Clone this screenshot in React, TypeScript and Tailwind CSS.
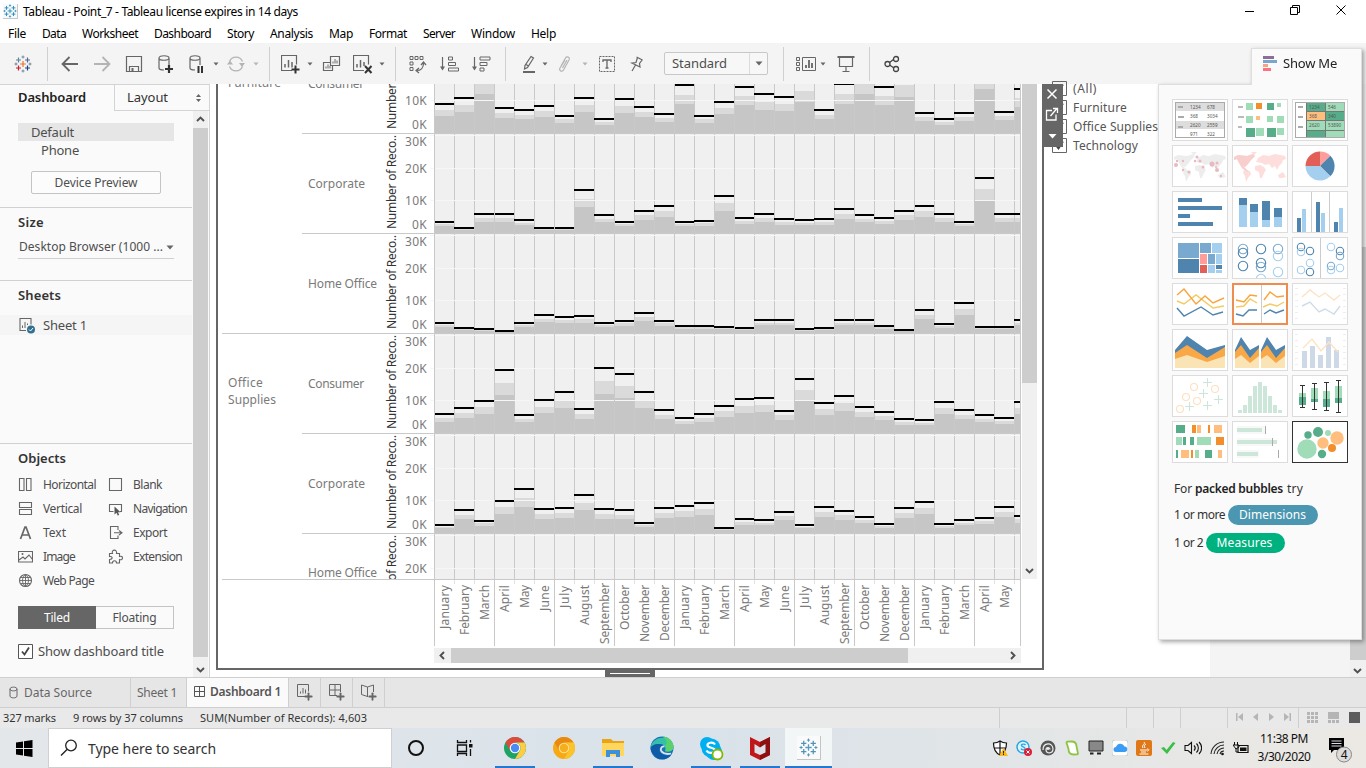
import React, { useLayoutEffect, useRef } from "react";
import { Plus } from "lucide-react";

/* Text whose letter spacing is adjusted so that it fills a known length. */
function Fit({ w, v = false, className = "", children }: { w: number; v?: boolean; className?: string; children: string }) {
  const ref = useRef<HTMLSpanElement>(null);
  useLayoutEffect(() => {
    const el = ref.current;
    if (!el) return;
    el.style.letterSpacing = "0px";
    const box = el.getBoundingClientRect();
    const natural = v ? box.height : box.width;
    el.style.letterSpacing = `${(w - natural) / children.length}px`;
  }, [w, v, children]);
  return (
    <span ref={ref} className={`inline-block shrink-0 whitespace-nowrap ${v ? "rotate-180 [writing-mode:vertical-rl]" : ""} ${className}`}>
      {children}
    </span>
  );
}

function Svg({ w, h, className = "", children }: { w: number; h: number; className?: string; children: React.ReactNode }) {
  return (
    <svg width={w} height={h} viewBox={`0 0 ${w} ${h}`} className={`block shrink-0 ${className}`} fill="none">
      {children}
    </svg>
  );
}

/* ---------- title and menu ---------- */

function TableauMark({ size, colors }: { size: number; colors: string[] }) {
  const [a, b, c, d, e] = colors;
  return (
    <svg width={size} height={size} viewBox="0 0 18 18" className="block shrink-0" strokeWidth="1.2">
      <path d="M9 6v6M6 9h6" stroke={a} />
      <path d="M4.5 2.5v5M2 5h5" stroke={b} />
      <path d="M13.5 2.5v5M11 5h5" stroke={c} />
      <path d="M4.5 10.5v5M2 13h5" stroke={d} />
      <path d="M13.5 10.5v5M11 13h5" stroke={e} />
      <path d="M9 .5v3M7.5 2h3M9 14.5v3M7.5 16h3M2 7.5v3M.5 9h3M16 7.5v3M14.5 9h3" stroke={b} strokeWidth=".9" />
    </svg>
  );
}

const menus: [string, number, string][] = [
  ["File", 18, "ml-2"],
  ["Data", 24, "ml-4"],
  ["Worksheet", 56, "ml-4"],
  ["Dashboard", 57, "ml-4"],
  ["Story", 27, "ml-4"],
  ["Analysis", 43, "ml-4"],
  ["Map", 24, "ml-4"],
  ["Format", 38, "ml-4"],
  ["Server", 32, "ml-4"],
  ["Window", 44, "ml-4"],
  ["Help", 25, "ml-4"],
];

function TitleBar() {
  return (
    <div className="flex h-[23px] items-center bg-white pl-[3px] text-black">
      <div className="border-r border-b border-[#c8c8c8] bg-[#f6fafc]">
        <TableauMark size={14} colors={["#2f8fb8", "#2b8ab5", "#2b8ab5", "#2b8ab5", "#2b8ab5"]} />
      </div>
      <Fit w={275} className="ml-[5px] text-[12px]">Tableau - Point_7 - Tableau license expires in 14 days</Fit>
      <div className="ml-auto flex items-center pr-[19px] pb-0.5">
        <Svg w={10} h={10}><path d="M0 5.500h9" stroke="#000" /></Svg>
        <Svg w={11} h={11} className="ml-[35px]"><path d="M.5 2.5h7v7h-7zM2.5 2.5v-2h7v7h-2" stroke="#000" /></Svg>
        <Svg w={11} h={11} className="ml-[35px]"><path d="M.5 .5l9 9M9.5 .5l-9 9" stroke="#000" /></Svg>
      </div>
    </div>
  );
}

function MenuBar() {
  return (
    <div className="flex h-5 items-center bg-white pt-[2px] text-[12px] text-black">
      {menus.map(([name, w, gap]) => (
        <Fit key={name} w={w} className={gap}>{name}</Fit>
      ))}
    </div>
  );
}

/* ---------- toolbar ---------- */

const G = "#666666";
const Divider = ({ className }: { className: string }) => <div className={`h-[34px] w-px shrink-0 bg-[#d0d0d0] ${className}`} />;
const Caret = ({ className, color = G }: { className: string; color?: string }) => (
  <Svg w={6} h={4} className={className}><path d="M.5 .5h5L3 3.5z" fill={color} /></Svg>
);

function Toolbar() {
  return (
    <div className="flex h-[41px] shrink-0 items-center bg-[#f4f4f4]">
      <div className="ml-3.5"><TableauMark size={18} colors={["#e8762c", "#59879b", "#5b6591", "#c72035", "#1f447e"]} /></div>
      <Divider className="ml-[15px]" />
      <Svg w={18} h={18} className="ml-[13px]"><path d="M17 9H2M8.500 2L1.500 9l7 7" stroke={G} strokeWidth="1.8" /></Svg>
      <Svg w={18} h={18} className="ml-3.5"><path d="M1 9h15M9.500 2l7 7-7 7" stroke="#b4b4b4" strokeWidth="1.800" /></Svg>
      <Svg w={18} h={18} className="ml-3.5">
        <path d="M1.500 1.500h15v15h-15zM4.500 16.500v-5h9v5" stroke={G} strokeWidth="1.200" /><path d="M6.500 13h2v3.500h-2z" fill={G} />
      </Svg>
      <Svg w={18} h={20} className="ml-3.5">
        <path d="M2 4v10c0 1.500 2.500 2 5 2M2 4c0-3 10-3 10 0s-10 3-10 0M12 4v7" stroke={G} strokeWidth="1.200" />
        <path d="M12 11v8M8 15h8" stroke="#333" strokeWidth="2.200" />
      </Svg>
      <Svg w={18} h={20} className="ml-[13px]">
        <path d="M2 4v10c0 1.500 2.500 2 5 2M2 4c0-3 10-3 10 0s-10 3-10 0M12 4v7" stroke={G} strokeWidth="1.200" />
        <path d="M10.500 12v7M14 12v7" stroke="#333" strokeWidth="2" />
      </Svg>
      <Caret className="ml-[7px]" />
      <Svg w={18} h={18} className="ml-2">
        <path d="M2.500 6.500A7 7 0 0 1 15.500 6.500M2.500 11.500A7 7 0 0 0 15.500 11.500" stroke="#b4b4b4" strokeWidth="1.300" />
        <path d="M12 8h6l-3 4zM0 9.500h6L3 5.500z" fill="#b4b4b4" />
      </Svg>
      <Caret className="ml-2" color="#b4b4b4" />
      <Divider className="ml-2.5" />
      <Svg w={20} h={20} className="ml-[11px]">
        <path d="M11 16.500H.500v-15h15v9" stroke={G} strokeWidth="1.200" /><path d="M4 13.500V10M7.500 13.500V6M11 13.500V8" stroke={G} strokeWidth="1.500" />
        <path d="M14.500 11.500v8M10.500 15.500h8" stroke="#333" strokeWidth="2" />
      </Svg>
      <Caret className="ml-1.5" />
      <Svg w={20} h={18} className="ml-[9px]">
        <path d="M8.500 1.500h9v9h-9zM8 7.500H1.500v8h9v-5" stroke={G} strokeWidth="1.200" />
        <path d="M11 8.500V6.500M13 8.500V4M15 8.500V5.500M4 13.500v-2M6 13.500v-4M8 13.500v-2.500" stroke={G} />
      </Svg>
      <Svg w={20} h={20} className="ml-[11px]">
        <path d="M11 16.500H.500v-15h15v9" stroke={G} strokeWidth="1.200" /><path d="M4 13.500V10M7.500 13.500V6M11 12V8" stroke={G} strokeWidth="1.500" />
        <path d="M12 12l6.500 7M18.500 12L12 19" stroke="#333" strokeWidth="2" />
      </Svg>
      <Caret className="ml-1.5" />
      <Divider className="ml-2.5" />
      <Svg w={18} h={20} className="ml-[13px]">
        <path d="M1 2.500h3v3H1zM6 2.500h3v3H6zM11 2.500h3v3h-3zM1 8h3v3H1zM1 13.500h3v3H1z" stroke={G} />
        <path d="M8 16.500c4 0 6.500-3 6.500-7M10 14l-3 2.500 3 2.500M12 11l2.500-3 2.500 3" stroke={G} strokeWidth="1.200" />
      </Svg>
      <Svg w={20} h={18} className="ml-[13px]">
        <path d="M2.500 2v12" stroke={G} strokeWidth="1.200" /><path d="M0 11.500h5l-2.500 4z" fill={G} />
        <path d="M8.500 2h4v3h-4zM8.500 7.500h7v3h-7zM8.500 13h10v3h-10z" stroke={G} />
      </Svg>
      <Svg w={20} h={18} className="ml-3">
        <path d="M2.500 2v12" stroke={G} strokeWidth="1.200" /><path d="M0 11.500h5l-2.500 4z" fill={G} />
        <path d="M8 2h10v3H8zM8 7.500h7v3H8zM8 13h4v3H8z" stroke={G} />
      </Svg>
      <Divider className="ml-[13px]" />
      <Svg w={18} h={20} className="ml-[14px]">
        <path d="M11 2.500l2.500 1.500-6 9.500-3 1.500.500-3.500zM6 10.500l2.500 1.500" stroke={G} strokeWidth="1.200" /><path d="M3 18h12" stroke={G} strokeWidth="2" />
      </Svg>
      <Caret className="ml-[4px]" />
      <Svg w={18} h={18} className="ml-2">
        <path d="M5 11l4.500-8c1-2 5-1 3.500 2L7.500 15c-1.500 2.500-5 .500-3.500-2l5-8M6.500 13l4.500-8" stroke="#b4b4b4" strokeWidth="1.200" />
      </Svg>
      <Caret className="ml-2" color="#b4b4b4" />
      <Svg w={18} h={18} className="ml-2.5">
        <path d="M1.500 1.500h15v15h-15z" stroke={G} strokeDasharray="2 1" /><path d="M5 7V5h8v2M9 5v8M7.500 13h3" stroke={G} strokeWidth="1.300" />
      </Svg>
      <Svg w={18} h={18} className="ml-3">
        <path d="M8.500 2l6 3M9.500 2.500L8 7.500l-4 .500 8 4-.500-3.500 3-4M7.500 10L4 16" stroke={G} strokeWidth="1.200" />
      </Svg>
      <div className="ml-[18px] flex h-[23px] w-[104px] items-center rounded-[2px] border border-[#c8c8c8] bg-[#f7f7f7] pl-[7px]">
        <Fit w={55} className="text-[13px] text-[#4e4e4e]">Standard</Fit>
        <div className="ml-auto flex h-full w-[18px] items-center justify-center border-l border-[#dcdcdc]">
          <Svg w={8} h={5}><path d="M.500 .500h7L4 4.500z" fill={G} /></Svg>
        </div>
      </div>
      <Divider className="ml-[15px]" />
      <Svg w={20} h={18} className="ml-3">
        <path d="M.500 2.500h3v3h-3zM.500 7.500h3v3h-3zM.500 12.500h3v3h-3zM6.500 2.500h13v13h-13z" stroke={G} /><path d="M10 13V10M13 13V5M16 13V8" stroke={G} strokeWidth="1.800" />
      </Svg>
      <Caret className="ml-1" />
      <Svg w={20} h={18} className="ml-2.5">
        <path d="M1.500 2h17" stroke={G} strokeWidth="2" /><path d="M3.500 2v9.500h13V2M10 11.500V16M6.500 16.500h7" stroke={G} strokeWidth="1.200" />
      </Svg>
      <Divider className="ml-[13px]" />
      <Svg w={18} h={18} className="ml-[13px]">
        <path d="M6.500 7.500l4-3M6.500 10l4.500 3" stroke="#444" strokeWidth="1.300" />
        <circle cx="4.500" cy="9" r="2.500" stroke="#444" strokeWidth="1.300" /><circle cx="13" cy="4" r="2.500" stroke="#444" strokeWidth="1.300" /><circle cx="13" cy="14" r="2.500" stroke="#444" strokeWidth="1.300" />
      </Svg>
    </div>
  );
}

/* ---------- left panel ---------- */

function ArrowGlyph({ dir }: { dir: "up" | "down" | "left" | "right" }) {
  const d = { up: "M1 6l3.500-3.500L8 6", down: "M1 3l3.500 3.500L8 3", left: "M6 1L2.500 4.500 6 8", right: "M3 1l3.500 3.500L3 8" }[dir];
  return <Svg w={9} h={9}><path d={d} stroke="#505050" strokeWidth="1.900" /></Svg>;
}

const S = { stroke: "#666", strokeWidth: 1.1 };
const objects: { name: string; w: number; icon: React.ReactNode }[] = [
  { name: "Horizontal", w: 53, icon: <path d="M1.500 1.500h4.500v12H1.500zM8.500 1.500h4.500v12H8.500z" {...S} /> },
  { name: "Blank", w: 29, icon: <path d="M1.500 1.500h12v12h-12z" {...S} /> },
  { name: "Vertical", w: 39, icon: <path d="M1.500 1.500h12v5h-12zM1.500 8.500h12v5h-12z" {...S} /> },
  { name: "Navigation", w: 54, icon: <><path d="M5.500 10.500H1.500v-7h12v7H12" {...S} /><path d="M6.500 5.500v8l2-1.700 1.200 2.700 1.500-.600-1.200-2.700h2.500z" fill="#555" /></> },
  { name: "Text", w: 23, icon: <path d="M2.500 14L7 2h1l4.500 12M4.500 10h6" stroke="#666" strokeWidth="1.700" /> },
  { name: "Export", w: 34, icon: <><path d="M10 5V1.500H2.500v12H10V10.500" {...S} /><path d="M6 7.700h7M11 5.500l3 2.200-3 2.300" {...S} /></> },
  { name: "Image", w: 32, icon: <><path d="M.500 2.500h14v10.500H.500zM1 11l4-3 2 2 4-4 3.500 4.500" {...S} /><circle cx="4.500" cy="5" r="1" fill="#666" /></> },
  { name: "Extension", w: 49, icon: <path d="M1.500 4.500h3c-1.500-4.500 5-4.500 4 0h3v3c4-1.500 4 4.500 0 3v3.500h-3c0-3-4-3-4 0h-3v-3.500c3.500 0 3.500-3.500 0-3z" {...S} /> },
  { name: "Web Page", w: 51, icon: <><circle cx="7.500" cy="7.500" r="6" {...S} /><path d="M1.500 7.500h12M7.500 1.500v12M2.500 4.500h10M2.500 10.500h10M7.500 1.500c-4 3-4 9 0 12M7.500 1.500c4 3 4 9 0 12" {...S} strokeWidth=".900" /></> },
];

function SidePanel() {
  return (
    <div className="flex w-[210px] shrink-0 flex-col border-r border-[#d4d4d4] bg-[#fafafa] text-[#4e4e4e]">
      <div className="flex h-[27px] shrink-0 border-t border-[#d4d4d4] text-[13px]">
        <div className="flex w-[114px] items-center pb-px pl-[18px]"><Fit w={68} className="font-semibold text-[#222]">Dashboard</Fit></div>
        <div className="flex flex-1 items-center border-b border-l border-[#d4d4d4] pr-[7px] pl-3">
          <Fit w={41} className="text-[#333]">Layout</Fit>
          <Svg w={7} h={8} className="ml-auto"><path d="M3.500 0L6 3H1zM3.500 8L1 5h5z" fill="#666" /></Svg>
        </div>
      </div>
      <div className="flex min-h-0 flex-1">
        <div className="w-[193px] text-[12px] leading-none">
          <div className="mt-3 ml-[18px] flex h-[18px] w-[156px] items-center bg-[#e6e6e6] pl-[13px]"><Fit w={43} className="text-[13px]">Default</Fit></div>
          <div className="ml-[41px] flex h-[18px] items-center"><Fit w={38} className="text-[13px]">Phone</Fit></div>
          <div className="mt-3 ml-[31px] flex h-[23px] w-[130px] items-center justify-center rounded-[2px] border border-[#c4c4c4] bg-[#fcfcfc]"><Fit w={83}>Device Preview</Fit></div>
          <div className="mt-[13px] w-48 border-t border-[#d0d0d0]" />
          <div className="flex h-7 items-center pl-[18px]"><Fit w={26} className="text-[13px] font-semibold text-[#333]">Size</Fit></div>
          <div className="ml-[18px] flex h-[23px] w-[156px] items-center justify-between border-b border-[#d0d0d0] pl-px">
            <Fit w={144}>Desktop Browser (1000 ...</Fit>
            <Svg w={8} h={5}><path d="M.500 .500h7L4 4.500z" fill={G} /></Svg>
          </div>
          <div className="mt-[21px] w-48 border-t border-[#d0d0d0]" />
          <div className="flex h-7 items-center pl-[18px]"><Fit w={43} className="text-[13px] font-semibold text-[#333]">Sheets</Fit></div>
          <div className="mt-1.5 flex h-5 w-48 items-center bg-[#f5f5f5] pl-[19px]">
            <Svg w={17} h={17}>
              <path d="M7 13.500H1v-12h11v6" stroke="#666" strokeWidth="1.100" /><path d="M3.500 11V8.500M6 11V5M8.500 8V6.500" stroke="#666" />
              <circle cx="12" cy="12.500" r="4" fill="#31708f" /><path d="M10 12.500l1.500 1.500 2.500-3" stroke="#fff" />
            </Svg>
            <Fit w={44} className="ml-[7px] text-[13px]">Sheet 1</Fit>
          </div>
          <div className="mt-[108px] w-48 border-t border-[#d0d0d0]" />
          <div className="flex h-7 items-center pl-[18px]"><Fit w={48} className="text-[13px] font-semibold text-[#333]">Objects</Fit></div>
          <div className="grid grid-cols-[90px_90px] pl-[18px]">
            {objects.map((o) => (
              <div key={o.name} className="flex h-6 items-center pt-px">
                <Svg w={15} h={16}>{o.icon}</Svg>
                <Fit w={o.w} className="ml-2.5">{o.name}</Fit>
              </div>
            ))}
          </div>
          <div className="mt-3.5 ml-[18px] flex h-[23px] w-[156px]">
            <div className="flex w-[78px] items-center justify-center bg-[#666] text-white"><Fit w={26}>Tiled</Fit></div>
            <div className="flex w-[78px] items-center justify-center border border-l-0 border-[#c4c4c4]"><Fit w={44}>Floating</Fit></div>
          </div>
          <div className="mt-[11px] ml-[18px] flex h-[22px] items-center">
            <Svg w={15} h={15}><path d="M.500 .500h14v14H.500z" stroke="#555" fill="#fff" /><path d="M4 7.500l2.500 3 4.500-7" stroke="#444" strokeWidth="1.800" /></Svg>
            <Fit w={126} className="ml-[5px] text-[13px]">Show dashboard title</Fit>
          </div>
        </div>
        <div className="flex w-[15px] flex-col items-center bg-[#f0f0f0]">
          <div className="flex h-[17px] items-center"><ArrowGlyph dir="up" /></div>
          <div className="h-[529px] w-full bg-[#cdcdcd]" />
          <div className="flex flex-1 items-center pt-1"><ArrowGlyph dir="down" /></div>
        </div>
      </div>
    </div>
  );
}

/* ---------- bar chart ---------- */

const heights: number[][] = [
  [29, 35, 65, 25, 23, 27, 17, 35, 14, 34, 26, 19, 48, 17, 31, 46, 39, 36, 52, 23, 49, 65, 46, 60, 20, 14, 20, 73, 21, 44],
  [11, 5, 19, 19, 13, 5, 5, 43, 18, 11, 22, 27, 11, 12, 37, 15, 19, 14, 13, 14, 24, 18, 15, 22, 27, 19, 11, 55, 19, 19],
  [10, 5, 4, 2, 10, 18, 16, 17, 10, 12, 20, 12, 7, 7, 6, 5, 13, 13, 4, 5, 13, 13, 7, 3, 23, 9, 30, 6, 6, 13],
  [19, 25, 32, 63, 18, 33, 41, 24, 65, 59, 41, 23, 15, 19, 27, 34, 35, 22, 54, 30, 37, 26, 21, 14, 13, 31, 23, 18, 15, 31],
  [8, 23, 12, 32, 44, 24, 25, 38, 24, 23, 10, 25, 27, 30, 5, 14, 13, 21, 8, 26, 22, 16, 9, 25, 31, 9, 13, 15, 26, 17],
];
const columns = Array.from({ length: 30 }, (_, i) => i);
const rowTops = [-51, 49, 149, 249, 349, 449];

function Chart() {
  return (
    <svg width="591" height="495" viewBox="0 0 591 495" className="block shrink-0" shapeRendering="crispEdges">
      <rect x="4" y="0" width="587" height="495" fill="#f0f0f0" />
      {columns.map((i) => i % 3 !== 0 && <rect key={i} x={4 + i * 20} y="0" width="1" height="495" fill="#c9c9c9" />)}
      {heights.map((row, r) => {
        const base = rowTops[r] + 100;
        return row.map((h, i) => {
          const x = 5 + i * 20;
          const light = Math.round(h * 0.8);
          const dark = Math.round(h * 0.6);
          const w = Math.min(19, 590 - x);
          return (
            <g key={`${r}-${i}`}>
              <rect x={x} y={base - light} width={w} height={light - dark} fill="#dadada" />
              <rect x={x} y={base - dark} width={w} height={dark} fill="#c6c6c6" />
            </g>
          );
        });
      })}
      {rowTops.map((t) => [2, 35, 67].map((o) => <rect key={t + o} x="0" y={t + o} width="590" height="1" fill="#f6f6f6" />))}
      {columns.map((i) => i % 3 === 0 && <rect key={i} x={4 + i * 20} y="0" width="1" height="495" fill="#c9c9c9" />)}
      <rect x="590" y="0" width="1" height="495" fill="#c9c9c9" />
      {rowTops.slice(1).map((t) => <rect key={t} x="0" y={t} width="591" height="1" fill="#c9c9c9" />)}
      {heights.map((row, r) =>
        row.map((h, i) => {
          const x = 4 + i * 20 + (i % 3 === 0 ? 1 : 0);
          return <rect key={`${r}-${i}`} x={x} y={rowTops[r] + 99 - h} width={Math.min(24 + i * 20, 590) - x} height="2" fill="#000" />;
        }),
      )}
    </svg>
  );
}

const segments: [string, number][] = [["Consumer", 56], ["Corporate", 57], ["Home Office", 69], ["Consumer", 56], ["Corporate", 57], ["Home Office", 69]];

function RowHeaders() {
  return (
    <div className="flex h-[495px] w-[208px] shrink-0 overflow-hidden text-[12px] text-[#7a7a7a]">
      <div className="w-20 shrink-0">
        <div className="flex h-[250px] items-start border-b border-[#c9c9c9] pl-1.5"><Fit w={53} className="-mt-[9px] leading-4">Furniture</Fit></div>
        <div className="flex flex-col pt-10 pl-1.5 leading-[17px]"><Fit w={35} className="self-start">Office</Fit><Fit w={48} className="self-start">Supplies</Fit></div>
      </div>
      <div className="-mt-[50px] w-[128px] shrink-0">
        {segments.map(([name, w], i) => (
          <div key={i} className={`flex border-b border-[#c9c9c9] ${i === 5 ? "h-[77px]" : "h-[100px]"}`}>
            <div className="flex w-[84px] items-center pt-px pl-1.5"><Fit w={w}>{name}</Fit></div>
            <div className="flex w-3 items-start justify-center pt-px"><Fit v w={94} className="text-[12px] leading-3 text-[#333]">Number of Reco..</Fit></div>
            <div className="flex w-[30px] flex-col items-end pr-px leading-4">
              <Fit w={22}>30K</Fit><Fit w={22} className="mt-[11px]">20K</Fit><Fit w={22} className="mt-4">10K</Fit><Fit w={15} className="mt-2">0K</Fit>
            </div>
          </div>
        ))}
      </div>
    </div>
  );
}

const months: [string, number][] = [["January", 44], ["February", 50], ["March", 35], ["April", 27], ["May", 23], ["June", 26], ["July", 23], ["August", 40], ["September", 61], ["October", 45], ["November", 57], ["December", 56]];

function MonthAxis() {
  return (
    <div className="ml-[212px] flex h-[66px] w-[587px] overflow-hidden border-r border-[#c9c9c9] text-[12px] text-[#7a7a7a]">
      {columns.map((i) => {
        const [name, w] = months[i % 12];
        return (
          <div key={i} className="flex w-5 shrink-0">
            <div className={`w-px ${i % 3 === 0 ? "h-full bg-[#c9c9c9]" : "h-1 bg-[#e2e2e2]"}`} />
            {i < 29 && <div className={`flex w-[19px] items-start justify-center ${name === "September" ? "pt-[3px]" : "pt-[5px]"}`}><Fit v w={w} className="leading-4">{name}</Fit></div>}
          </div>
        );
      })}
    </div>
  );
}

function Dashboard() {
  return (
    <div className="relative flex min-w-0 flex-1 bg-[#f4f4f4]">
      <div className="flex w-[1000px] shrink-0 bg-white pl-1.5">
        <div className="flex flex-col items-center">
          <div className="h-[586px] w-[828px] shrink-0 border-2 border-t-0 border-[#666] pl-1">
            <div className="flex">
              <RowHeaders />
              <Chart />
              <div className="ml-px flex h-[495px] w-[15px] flex-col bg-[#f0f0f0]">
                <div className="h-[299px] bg-[#cdcdcd]" />
                <div className="mt-auto flex h-[17px] items-center justify-center"><ArrowGlyph dir="down" /></div>
              </div>
            </div>
            <div className="h-px w-[799px] bg-[#c9c9c9]" />
            <MonthAxis />
            <div className="mt-0.5 ml-[212px] flex h-[15px] w-[587px] items-center bg-[#f0f0f0]">
              <div className="flex w-[17px] justify-center"><ArrowGlyph dir="left" /></div>
              <div className="h-full w-[457px] bg-[#cdcdcd]" />
              <div className="ml-auto flex w-[17px] justify-center"><ArrowGlyph dir="right" /></div>
            </div>
          </div>
          <div className="flex h-2 w-[50px] items-center justify-center bg-[#666]"><div className="h-px w-10 bg-white" /></div>
        </div>
        <div className="flex flex-col pl-2 text-[12px] text-[#555]">
          {([["(All)", 24], ["Furniture", 54], ["Office Supplies", 85], ["Technology", 65]] as [string, number][]).map(([name, w], i) => (
            <div key={name} className={`flex h-[19px] items-center ${i === 0 ? "-mt-[5px]" : ""}`}>
              <Svg w={15} h={15}><path d="M.500 .500h14v14H.500z" stroke="#666" /><path d="M4 7.500l2.500 3 4.500-7" stroke="#444" strokeWidth="1.800" /></Svg>
              <Fit w={w} className="ml-1.5">{name}</Fit>
            </div>
          ))}
        </div>
      </div>
      <div className="ml-auto flex w-4 flex-col bg-[#f0f0f0]">
        <div className="mt-[163px] h-[413px] bg-[#cdcdcd]" />
        <div className="flex flex-1 items-center justify-center pt-1 pr-px"><ArrowGlyph dir="down" /></div>
      </div>
      <div className="absolute top-0 left-[832px] h-[63px] w-[21px] bg-[#666]">
        <Svg w={21} h={63}>
          <path d="M5.500 5.500l9 9M14.500 5.500l-9 9" stroke="#fff" strokeWidth="1.500" />
          <path d="M10 26.500H4.500v9.500h9.500V30.500M8.500 32l6-7M11 24.500h4.500V29" stroke="#fff" strokeWidth="1.300" />
          <path d="M6.500 50h8l-4 4.500z" fill="#fff" />
        </Svg>
      </div>
    </div>
  );
}

/* ---------- show me ---------- */

const DB = "#4e84ad", MB = "#7aa9cf", LB = "#a5cfef", DG = "#57ac8a", LG = "#9fdcb7", OR = "#f28e2b", LO = "#ffbe7d", YE = "#f4cb63", PK = "#ff9d9a", RD = "#e15f56", PG = "#cde6da";
type R = [number, number, number, number, string];
const rects = (list: R[]) => <g shapeRendering="crispEdges">{list.map(([x, y, w, h, c], i) => <rect key={i} x={x} y={y} width={w} height={h} fill={c} />)}</g>;
const line = (pts: string, c: string) => <polyline points={pts} stroke={c} strokeWidth="1.400" />;
const rings = (r: number, list: [number, number, string][]) => list.map(([x, y, c], i) => <circle key={i} cx={x} cy={y} r={r} stroke={c} strokeWidth="1.100" />);
const cellText = (rows: string[][], xs: number[]) => rows.map((row, r) => row.map((t, c) => <text key={`${r}${c}`} x={xs[c]} y={9 + r * 9.1} fontSize="4.6" fill="#555">{t}</text>));
const land = (
  <>
    <path d="M1 11l4-2 9 1 6-2 2 2-4 4-3 4-3 3-2-1 4 4 2 2-3-1-4-3-3-5-2-4-3 1z" />
    <path d="M11 24l6 1 1 3-3 4-2 4-1-6-2-3zM18 6h6l-3 3z" />
    <path d="M23 16l2-4 5-3 6 1 6-2 10 2 1 3-3 1-1 3-3 3-2 4-2-4-3 2-3-4-4 1-3-2z" />
    <path d="M22 20l5-1 4 2 2 3-2 3-2 5h-2l-1-6-4-2zM45 29l5-3 3 5-4 1h-3z" />
  </>
);
const sideTicks = <path d="M2 4.500h3M2 10.500h3M2 16.500h3M2 22.500h3M2 28.500h3M2 34.500h3M50 4.500h3M50 10.500h3M50 16.500h3M50 22.500h3M50 28.500h3M50 34.500h3" stroke="#eee" />;
const area = (x: number) => (
  <g transform={`translate(${x} 0)`}>
    <path d="M2 20L8 7l9 13 9-5v23H2z" fill={DB} /><path d="M2 22l6-7 9 13 9-10v20H2z" fill="#f9a848" /><path d="M2 29l6-4 9 8 9-7v12H2z" fill="#fae3b4" />
  </g>
);
const box = (x: number, a: number, m: number, b: number, t: number, u: number) => (
  <g key={x}>{rects([[x, a, 7, m - a, LG], [x, m, 7, b - m, DG], [x + 3, t, 1, u - t, "#333"], [x + 1, t, 5, 1, "#333"], [x + 1, u - 1, 5, 1, "#333"]])}</g>
);

const thumbs: React.ReactNode[] = [
  <>{rects([[2, 2, 50, 36, "#aaa"], [3, 3, 48, 34, "#fff"], [3, 3, 48, 8, "#ddd"], [3, 21, 48, 8, "#ddd"], [5, 6, 5, 2, "#aaa"], [5, 16, 6, 2, "#aaa"], [5, 26, 5, 2, "#aaa"]])}{cellText([["1234", "678"], ["368", "3034"], ["2620", "2559"], ["971", "322"]], [17, 34])}</>,
  rects([[5, 6, 5, 2, "#bbb"], [5, 16, 6, 2, "#bbb"], [5, 26, 4, 2, "#bbb"], [13, 3, 7, 7, LG], [23, 3, 6, 6, OR], [34, 3, 7, 7, DG], [44, 3, 4, 4, LG], [13, 16, 7, 7, LG], [23, 16, 4, 4, LO], [34, 16, 6, 6, LG], [44, 16, 7, 7, LG], [13, 28, 9, 9, DG], [23, 28, 8, 8, LG], [34, 28, 9, 9, DG], [44, 28, 7, 7, LG]]),
  <>{rects([[2, 2, 50, 36, "#aaa"], [3, 3, 48, 34, "#fff"], [13, 3, 38, 34, "#777"], [14, 3, 18, 8, DG], [33, 3, 18, 8, LG], [14, 12, 18, 8, LO], [33, 12, 18, 8, DG], [14, 21, 18, 9, LG], [33, 21, 18, 9, LG], [14, 31, 18, 6, DG], [33, 31, 18, 6, LG], [5, 6, 5, 2, "#aaa"], [5, 16, 5, 2, "#aaa"], [5, 26, 5, 2, "#aaa"]])}{cellText([["1234", "546"], ["368", "340"], ["2620", "53890"]], [16, 35])}</>,
  <><g fill="#ededed">{land}</g><g fill="#eab9c0">{([[3, 19, 2], [4, 15, 1.2], [10, 15, 1.2], [24, 11, 1.500], [22, 15, 1.200], [27, 15, 1.500], [30, 21, 1.500], [39, 18, 2.500], [44, 17, 1.500], [43, 21, 1], [44, 24, 2], [10, 24, 1.200], [16, 26, 1.600], [48, 30, 1.200]] as number[][]).map(([x, y, r], i) => <circle key={i} cx={x} cy={y} r={r} />)}</g></>,
  <><g fill="#fddedc">{land}</g><path d="M1 11l4-2 9 1 6-2 2 2-4 4-3 4-3 3-2-1 4 4 2 2-3-1-4-3-3-5-2-4-3 1z" fill="#f8cfcc" /></>,
  <><path d="M27 20V5.500A14.500 14.500 0 0 0 12.500 20z" fill={RD} /><path d="M27 20V5.500A14.500 14.500 0 0 1 37.300 9.700z" fill={PK} /><path d="M27 20L37.300 9.700A14.500 14.500 0 0 1 37.300 30.300z" fill={DB} /><path d="M27 20H12.500A14.500 14.500 0 0 0 37.300 30.300z" fill={LB} /></>,
  rects([[5, 6, 24, 4, DB], [5, 14, 44, 4, DB], [5, 22, 12, 4, DB], [5, 30, 35, 4, DB]]),
  rects([[6, 6, 8, 7, DB], [6, 13, 8, 22, LB], [17, 12, 8, 8, DB], [17, 20, 8, 15, LB], [29, 9, 8, 19, DB], [29, 28, 8, 7, LB], [41, 16, 8, 9, DB], [41, 25, 8, 10, LB]]),
  rects([[18, 0, 1, 40, "#ccc"], [36, 0, 1, 40, "#ccc"], [4, 26, 4, 14, DB], [9, 17, 4, 23, LB], [23, 10, 4, 30, DB], [28, 21, 4, 19, LB], [41, 30, 4, 10, DB], [46, 16, 4, 24, LB]]),
  rects([[5, 5, 21, 15, MB], [5, 21, 21, 14, DB], [27, 5, 11, 10, MB], [39, 5, 10, 10, LB], [27, 16, 7, 10, PK], [27, 27, 7, 8, RD], [35, 16, 7, 10, MB], [43, 16, 6, 10, LB], [35, 27, 7, 8, LB], [43, 27, 6, 4, DB], [43, 32, 6, 3, LB]]),
  rings(4.7, [[10, 11, MB], [10, 15, DB], [10, 28, DB], [28, 11, DB], [28, 25, DB], [28, 29, MB], [28, 41, LB], [45, 11, MB], [45, 18, LB], [45, 34, LB]]),
  <>{rects([[27, 0, 1, 40, "#ccc"]])}{rings(3.700, [[8, 9, DB], [8, 14, LB], [17, 13, DB], [17, 25, LB], [8, 32, LB], [17, 34, DB], [38, 9, LB], [47, 13, DB], [47, 18, MB], [38, 28, MB], [38, 32, LB], [47, 30, LB]])}</>,
  <>{line("4,17 11,20 23,11 40,24 51,22", YE)}{line("4,11 11,5 23,20 32,12 40,19 51,14", "#f9a53d")}{line("4,24 11,32 28,23 40,31 50,28", DB)}</>,
  <>{rects([[28, 0, 1, 40, "#ccc"]])}{line("3,16 11,18 17,11 24,12", "#f9a53d")}{line("3,23 11,22 17,15 24,19", YE)}{line("3,30 10,32 16,26 24,26", DB)}{line("31,16 37,8 44,13 51,12", "#f9a53d")}{line("30,23 37,20 44,22 51,18", YE)}{line("31,30 37,26 43,29 51,26", DB)}</>,
  <>{sideTicks}{line("9,13 17,6 26,13 32,9 41,16 47,11", "#fde3c4")}{line("9,22 17,18 26,28 32,25 41,30 47,22", "#cfdce8")}</>,
  <><path d="M2 20L14 6l20 14 18-5v23H2z" fill={DB} /><path d="M2 23l12-8 20 13 18-11v21H2z" fill="#f9a848" /><path d="M2 29l12-4 20 7 18-6v12H2z" fill="#fae3b4" /></>,
  <>{area(0)}{area(26)}</>,
  <>{sideTicks}{rects([[9, 21, 5, 17, "#cdd9e6"], [17, 16, 5, 22, "#cdd9e6"], [25, 25, 5, 13, "#cdd9e6"], [33, 7, 5, 31, "#cdd9e6"], [41, 20, 5, 18, "#cdd9e6"]])}{line("10,18 19,9 28,21 36,12 45,22", "#fde3c4")}</>,
  <>{rings(3.500, [[21, 11, "#fde0bf"], [42, 13, "#fde0bf"], [13, 21, "#fde0bf"], [24, 25, "#fde0bf"], [7, 33, "#fde0bf"]])}<path d="M34.500 2v9M30 6.500h9M30.500 13v9M26 17.500h9M45.500 19v9M41 23.500h9M34.500 25v9M30 29.500h9M16.500 26v9M12 30.500h9" stroke={PG} /></>,
  rects([34, 29, 20, 10, 6, 10, 20, 29, 34].map((y, i): R => [5 + i * 5, y, 4, 37 - y, PG])),
  <>{box(6, 17, 21, 29, 9, 32)}{box(18, 12, 23, 26, 7, 34)}{box(30, 15, 23, 31, 6, 35)}{box(42, 10, 22, 27, 4, 37)}</>,
  rects([[3, 3, 9, 8, DG], [19, 3, 4, 8, OR], [24, 3, 4, 8, LO], [35, 3, 2, 8, OR], [41, 3, 8, 8, LO], [3, 15, 6, 8, LG], [10, 15, 3, 8, DG], [17, 15, 4, 8, DG], [24, 15, 14, 8, LG], [43, 15, 8, 8, OR], [3, 28, 2, 8, DG], [8, 28, 8, 8, LO], [18, 28, 2, 8, OR], [22, 28, 4, 8, LG], [32, 28, 7, 8, DG], [45, 28, 4, 8, LO]]),
  rects([[4, 4, 29, 8, "#f7f8f7"], [4, 16, 35, 8, "#f7f8f7"], [4, 28, 22, 8, "#f7f8f7"], [4, 6, 25, 4, PG], [4, 18, 40, 4, PG], [4, 30, 21, 4, PG], [32, 4, 1, 8, "#aaa"], [39, 16, 1, 8, "#aaa"], [45, 28, 1, 8, "#aaa"]]),
  <>{([[14, 27, 9.700, LG], [15, 13, 3.700, DG], [25, 10, 5, DG], [35, 11, 3, LG], [44, 16, 6.700, LO], [30, 21, 5.700, LO], [39, 26, 4, OR], [29, 32, 4.200, DG]] as [number, number, number, string][]).map(([x, y, r, c], i) => <circle key={i} cx={x} cy={y} r={r} fill={c} />)}</>,
];

function ShowMe() {
  return (
    <div className="absolute top-12 left-[1158px] flex w-[204px] flex-col drop-shadow-[2px_2px_2px_rgba(0,0,0,0.35)]">
      <div className="z-10 -mb-px ml-[93px] flex h-[37px] w-[111px] items-center border border-b-0 border-[#dedede] bg-[#fafafa] pb-[7px] pl-[11px]">
        <Svg w={15} h={16}>
          <path d="M0 0h11v3H0z" fill="#8a6f9b" /><path d="M0 4h14v3H0z" fill="#7aa5cf" /><path d="M0 8h5v3H0z" fill="#f7a580" /><path d="M0 12h8v3H0z" fill="#ff7080" />
        </Svg>
        <Fit w={54} className="ml-[5px] text-[13px] text-[#222]">Show Me</Fit>
      </div>
      <div className="h-[556px] border border-[#dedede] bg-[#fafafa] pt-3.5 pl-[13px] text-[12px] text-[#333]">
        <div className="grid w-44 grid-cols-3 gap-1">
          {thumbs.map((t, i) => (
            <div key={i} className={`relative h-[42px] w-14 overflow-hidden bg-white ${i === 13 || i === 23 ? "" : "border border-[#dcdcdc]"} ${i === 23 ? "border border-[#333]" : ""} ${i === 13 ? "outline-2 -outline-offset-2 outline-[#ee8d50]" : ""}`}>
              <svg width="54" height="40" viewBox="0 0 54 40" className={`block ${i === 13 ? "m-px" : ""}`} fill="none">{t}</svg>
            </div>
          ))}
        </div>
        <div className="mt-[17px] ml-[2px] flex h-[18px] items-center"><Fit w={18}>For</Fit><Fit w={88} className="ml-[3px] font-semibold text-[#222]">packed bubbles</Fit><Fit w={16} className="ml-[4px]">try</Fit></div>
        <div className="mt-[7px] ml-[2px] flex h-5 items-center">
          <Fit w={51}>1 or more</Fit>
          <div className="ml-[3px] flex h-5 w-[90px] items-center justify-center rounded-full bg-[#4b96b1] pr-px text-white"><Fit w={67}>Dimensions</Fit></div>
        </div>
        <div className="mt-2 ml-[2px] flex h-5 items-center">
          <Fit w={29}>1 or 2</Fit>
          <div className="ml-[3px] flex h-5 w-[79px] items-center justify-center rounded-full bg-[#00b180] pr-[2px] text-white"><Fit w={56}>Measures</Fit></div>
        </div>
      </div>
    </div>
  );
}

/* ---------- bottom bars ---------- */

const gridIcon = "M.500 .500h10v10H.500zM5.500 .500v10M.500 5.500h10";
const AddTab = ({ d }: { d: string }) => (
  <div className="flex w-8 items-center justify-center border-r border-[#cfcfcf]">
    <div className="relative h-[17px] w-[15px]">
      <Svg w={14} h={14}><path d={d} stroke="#666" /></Svg>
      <Plus className="absolute right-[-2px] bottom-[-1px]" size={11} strokeWidth={4} color="#666" />
    </div>
  </div>
);

function SheetTabs() {
  return (
    <div className="flex h-[31px] shrink-0 border-t border-b border-[#cfcfcf] bg-[#e6e6e6] text-[12px] text-[#666]">
      <div className="flex w-[131px] items-center border-r border-[#cfcfcf] pl-[9px]">
        <Svg w={9} h={13}><path d="M1 3v7c0 2.500 7 2.500 7 0V3M1 3c0-2.500 7-2.500 7 0s-7 2.500-7 0" stroke="#666" /></Svg>
        <Fit w={68} className="ml-1.5">Data Source</Fit>
      </div>
      <div className="flex w-14 items-center border-r border-[#cfcfcf] pl-1.5"><Fit w={40}>Sheet 1</Fit></div>
      <div className="flex w-[102px] items-center border-r border-[#cfcfcf] bg-[#fafafa] pb-0.5 pl-[7px]">
        <Svg w={11} h={11}><path d={gridIcon} stroke="#555" /></Svg>
        <Fit w={71} className="ml-[5px] font-semibold text-[#555]">Dashboard 1</Fit>
      </div>
      <AddTab d="M8 12.500H.500V.500h11v7M3.500 9.500V7.500M6 9.500V4M8.500 9.500V5.500" />
      <AddTab d="M11.500 8V.500H.500v11H8M6 .500v11M.500 6h11" />
      <AddTab d="M6.500 13V3L.500 1v9.500l6 2M6.500 3l6-2v7" />
    </div>
  );
}

function StatusBar() {
  return (
    <div className="flex h-5 shrink-0 items-center bg-[#e9e9e9] text-[11px] text-[#333]">
      <Fit w={53} className="mb-[2px] ml-[3px]">327 marks</Fit>
      <Fit w={110} className="mb-[2px] ml-[17px]">9 rows by 37 columns</Fit>
      <Fit w={167} className="mb-[2px] ml-[17px]">SUM(Number of Records): 4,603</Fit>
      <div className="ml-auto flex h-full w-[367px] items-center">
        <div className="h-full w-[127px] border-l border-[#cfcfcf]" />
        <div className="h-full w-[27px] border-l border-[#cfcfcf]" />
        <div className="h-full w-[27px] border-l border-[#cfcfcf]" />
        <div className="h-full w-[47px] border-l border-[#cfcfcf]" />
        <div className="flex h-full w-[71px] items-center gap-[9px] border-l border-[#cfcfcf] pb-[2px] pl-2">
          <Svg w={7} h={8}><path d="M0 0h1.500v8H0zM7 0v8L2 4z" fill="#b5b5b5" /></Svg>
          <Svg w={7} h={8}><path d="M6 0v8L1 4z" fill="#b5b5b5" /></Svg>
          <Svg w={7} h={8}><path d="M1 0v8l5-4z" fill="#b5b5b5" /></Svg>
          <Svg w={7} h={8}><path d="M5.500 0H7v8H5.500zM0 0v8l5-4z" fill="#b5b5b5" /></Svg>
        </div>
        <div className="flex h-full items-center gap-2.5 border-l border-[#cfcfcf] pb-[2px] pl-2">
          <Svg w={11} h={11}><path d="M0 0h3v3H0zM4 0h3v3H4zM8 0h3v3H8zM0 4h3v3H0zM4 4h3v3H4zM8 4h3v3H8zM0 8h3v3H0zM4 8h3v3H4zM8 8h3v3H8z" fill="#b5b5b5" /></Svg>
          <Svg w={11} h={11}><path d="M0 0h11v7H0zM0 8h3v3H0zM4 8h3v3H4zM8 8h3v3H8z" fill="#b5b5b5" /></Svg>
          <Svg w={11} h={11}><path d="M0 0h11v11H0z" fill="#5c5c5c" /></Svg>
        </div>
      </div>
    </div>
  );
}

function Ball({ canary = false }: { canary?: boolean }) {
  return (
    <Svg w={24} h={24}>
      <circle cx="12" cy="12" r="11" fill={canary ? "#f7a913" : "#1da462"} />
      <path d="M2.500 6.500A11 11 0 0 1 21.500 6.500H12L7.200 14.700z" fill={canary ? "#e98a10" : "#dd4b3e"} />
      <path d="M21.500 6.500A11 11 0 0 1 12 23l4.800-8.300A5.500 5.500 0 0 0 12 6.500z" fill={canary ? "#fcc42c" : "#ffcd41"} />
      <circle cx="12" cy="12" r="5.300" fill={canary ? "#fde293" : "#fff"} /><circle cx="12" cy="12" r="4.200" fill={canary ? "#f6ae1e" : "#4a8af4"} />
    </Svg>
  );
}

function TaskApp({ open = true, active = false, className = "", children }: { open?: boolean; active?: boolean; className?: string; children: React.ReactNode }) {
  return (
    <div className={`flex h-full shrink-0 flex-col items-center ${active ? "bg-[#f3f6f7]" : ""} ${className}`}>
      <div className="flex flex-1 items-center">{children}</div>
      <div className={`-mt-0.5 h-0.5 w-full ${open ? "bg-[#2577cf]" : ""}`} />
    </div>
  );
}

function Taskbar() {
  return (
    <div className="flex h-10 shrink-0 items-center bg-gradient-to-r from-[#e4e7ea] via-[#d9e2ea] via-50% to-[#ece9e4]">
      <Svg w={17} h={17} className="ml-4"><path d="M0 2.500l7-1v6.500H0zM8 1.300L16.500 0v8H8zM0 9h7v6.500l-7-1zM8 9h8.500v8L8 15.700z" fill="#000" /></Svg>
      <div className="ml-[15px] flex h-10 w-[344px] items-center border border-[#cfcfcf] bg-white pl-[11px]">
        <Svg w={18} h={18}><circle cx="11" cy="6.500" r="5.300" stroke="#222" strokeWidth="1.300" /><path d="M7 10.500L1 16.500" stroke="#222" strokeWidth="1.500" /></Svg>
        <Fit w={128} className="mt-px ml-[10px] text-[14px] text-[#333]">Type here to search</Fit>
      </div>
      <Svg w={18} h={18} className="ml-[15px]"><circle cx="9" cy="9" r="7" stroke="#111" strokeWidth="2" /></Svg>
      <Svg w={18} h={18} className="ml-[31px]">
        <path d="M1.500 1v2.500h9V1M1.500 6h9v6.500h-9zM1.500 17v-2.500h9V17M14.500 1v2.500M14.500 10v7" stroke="#111" strokeWidth="1.300" /><path d="M13 5h3.500v3.500H13z" fill="#111" />
      </Svg>
      <TaskApp className="ml-[21px] w-10"><Ball /></TaskApp>
      <TaskApp className="ml-[9px] w-10" open={false}><Ball canary /></TaskApp>
      <TaskApp className="ml-[9px] w-10">
        <Svg w={22} h={22}><path d="M0 2h9l2 2h11v4H0z" fill="#e8a317" /><path d="M0 6h22v13H0z" fill="#ffd75e" /><path d="M4 20v-7h14v7h-4v-3H8v3z" fill="#3d8fd9" /></Svg>
      </TaskApp>
      <TaskApp className="ml-[9px] w-10" open={false}>
        <Svg w={24} h={24}>
          <circle cx="12" cy="12" r="11.500" fill="#1673bf" /><path d="M.700 11C3 0 20-2 23.300 10c.700 5-4 6.500-8.300 5 2-4-1-7-5-7-4 0-7 1-9.300 3z" fill="#35c1a9" />
          <path d="M12 .500c7 0 11 5 11.500 9.500.500 5-5 6.500-8.500 5 1-2 1-3.500 0-5C18 7 17 3 12 .500z" fill="#5ad16a" />
          <path d="M.500 12C3 7 11 7 14 10c-4-1-6 3-4 6 2 3.500 7 4.500 11.500 2.500-4 6-13 6.500-17 1C2 17 1 15 .500 12z" fill="#0f5ba5" /><path d="M14.500 10.500c-3.500-.500-4.500 3-3 5 2 2 6 3 9.500 2" stroke="#dbe5eb" strokeWidth="1.800" />
        </Svg>
      </TaskApp>
      <TaskApp className="ml-[9px] w-10">
        <Svg w={25} h={25}>
          <circle cx="8" cy="8" r="7" fill="#00aff0" /><circle cx="15" cy="16" r="8" fill="#00aff0" /><circle cx="12" cy="12" r="9.500" fill="#00aff0" />
          <path d="M16 8.500c-2-3-8-2-7.500 1 .500 3 7.500 1.500 7.500 5 0 3-6.500 3.500-8.500 0" stroke="#fff" strokeWidth="2.200" /><circle cx="18.500" cy="18.500" r="5" fill="#fff" stroke="#7fba00" strokeWidth="1.800" />
        </Svg>
      </TaskApp>
      <TaskApp className="ml-[9px] w-10"><Svg w={24} h={26}><path d="M2 2l10 5 10-5v18l-10 5L2 20z" fill="#c01818" /><path d="M12 7l10-5v18l-10 5z" fill="#8e0f12" /><path d="M6.500 9l5.500 3.500L17.500 9v8.500L12 20l-5.500-2.500z" fill="#dbe3ea" /></Svg></TaskApp>
      <TaskApp active className="ml-[5px] w-[47px]">
        <div className="border-r border-b border-[#c4c4c4] bg-[#fafafa] p-0.5"><TableauMark size={19} colors={["#5b9ac0", "#4f93bb", "#4f93bb", "#4f93bb", "#4f93bb"]} /></div>
      </TaskApp>
      <div className="ml-auto flex items-center gap-2 pr-[15px]">
        <Svg w={16} h={16}><path d="M8 1c2 1.500 4 2 6.500 2 0 6-2 10-6.500 12C3.500 13 1.500 9 1.500 3 4 3 6 2.500 8 1zM8 1v14M2 8h12" stroke="#111" strokeWidth="1.200" fill="#fff" /><path d="M11.500 8l4.500 8H7z" fill="#fdb813" /><path d="M11.500 11v2.500M11.500 14v1" stroke="#222" /></Svg>
        <Svg w={16} h={16}><circle cx="7" cy="7" r="6" fill="#dff3fc" stroke="#29a9e1" strokeWidth="1.500" /><path d="M9.500 5C8.500 3.500 5 4 5.500 5.500S9.500 7 9 9c-.500 1.500-3.500 1-4-.500" stroke="#29a9e1" strokeWidth="1.400" /><circle cx="12" cy="12" r="4" fill="#d9203a" /><path d="M10.500 10.500l3 3M13.500 10.500l-3 3" stroke="#fff" /></Svg>
        <Svg w={16} h={16}><circle cx="8" cy="8" r="7.500" fill="#555" /><path d="M3 10c0-8 10-8 10-1 0 5-7 5-7 1 0-3 4-3 4-.500" stroke="#eee" strokeWidth="1.200" /><circle cx="8" cy="9" r="1" fill="#fff" /></Svg>
        <Svg w={16} h={16}><path d="M2.500 2.500c0-1 1-1 5-1 4 0 5 2 5 5l1.500 7c0 1-1 1-4.500 1-4 0-5-2-5-5.500z" stroke="#8cc540" strokeWidth="1.800" fill="#fff" /></Svg>
        <Svg w={16} h={16}><path d="M1 1h14v10H1z" fill="#888" stroke="#222" /><path d="M2 13.500h3.500M9 13.500h4" stroke="#222" strokeWidth="2" /></Svg>
        <Svg w={16} h={16}><rect width="16" height="16" rx="3" fill="#fff" stroke="#ccc" /><path d="M4 12h8.500a2.700 2.700 0 0 0 0-5.500A4.500 4.500 0 0 0 4 7a2.500 2.500 0 0 0 0 5z" fill="#3b9cf5" /></Svg>
        <Svg w={16} h={16}><rect width="16" height="16" rx="2" fill="#e07818" /><path d="M8 2c2 2-3 3-1 6M10 4c-2 1-2 2-1 4M4 10h7M5 12h5M3.500 14h9M11 9c3 0 2 2 0 2" stroke="#fff" /></Svg>
        <Svg w={16} h={16}><path d="M1 8l3-1 2.500 3L13 2l2.500 1L7 14z" fill="#3cbf45" /></Svg>
        <Svg w={18} h={16}><path d="M1 5.500h3l3.500-3v11L4 10.500H1zM10 5.500c1.500 1.500 1.500 3.500 0 5M12.500 3.500c2.500 2.500 2.500 6.500 0 9M15 2c3.500 3.500 3.500 8.500 0 12" stroke="#111" strokeWidth="1.100" /></Svg>
        <Svg w={15} h={16}><path d="M1 14A13 13 0 0 1 14 2M4 14A10 10 0 0 1 14 5M7 14A7 7 0 0 1 14 8M10 14a4 4 0 0 1 4-3" stroke="#222" strokeWidth="1.100" /><circle cx="12.500" cy="14" r="1.300" fill="#111" /></Svg>
        <Svg w={16} h={16}><path d="M5 5.500h10v7H5z" stroke="#111" strokeWidth="1.200" /><path d="M7 7.500h6.500v3.500H7z" fill="#111" /><path d="M1.500 2v3M4.500 2v3M0 5h6v2L3 9zM3 8.500v3.500h2" stroke="#111" /></Svg>
        <div className="flex w-[54px] flex-col items-center text-[12px] leading-[18px] text-[#111]"><Fit w={48}>11:38 PM</Fit><Fit w={53}>3/30/2020</Fit></div>
        <Svg w={26} h={30} className="-mr-[3px] ml-[9px]">
          <path d="M1 5h15v12H6l-3 3v-3H1z" fill="#000" /><path d="M3.500 8h10M3.500 10.500h10M3.500 13h10" stroke="#ddd" />
          <circle cx="16" cy="21.500" r="7.500" fill="#dcdcda" stroke="#888" /><text x="12.700" y="26" fontSize="12" fill="#111">4</text>
        </Svg>
      </div>
    </div>
  );
}

export default function App() {
  return (
    <div className="relative flex h-[768px] w-[1366px] flex-col overflow-hidden bg-white font-['Noto_Sans','Open_Sans',sans-serif] leading-none">
      <TitleBar />
      <MenuBar />
      <Toolbar />
      <div className="flex h-[593px] shrink-0">
        <SidePanel />
        <Dashboard />
      </div>
      <SheetTabs />
      <StatusBar />
      <Taskbar />
      <ShowMe />
    </div>
  );
}
